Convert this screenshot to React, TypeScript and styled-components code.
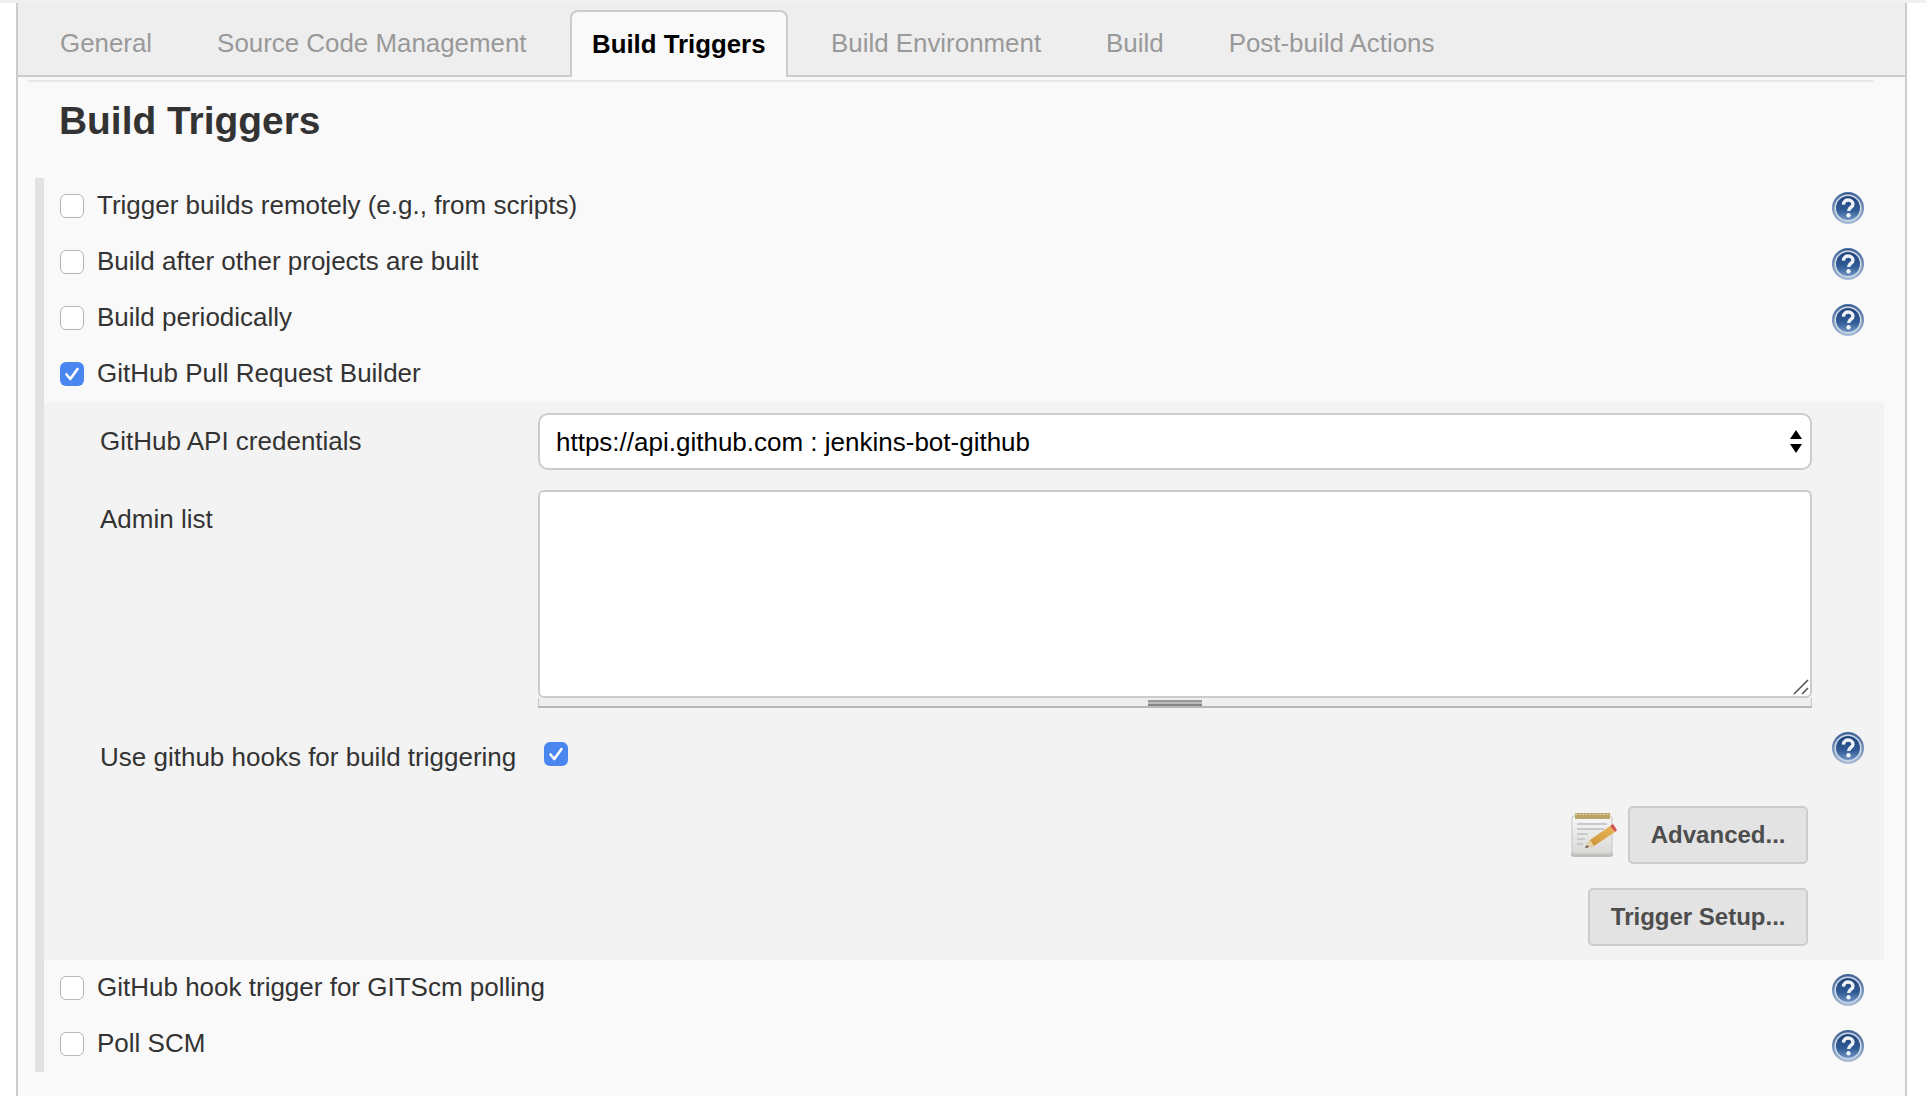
import * as React from 'react';
import styled, { createGlobalStyle } from 'styled-components';

const GlobalStyle = createGlobalStyle`
  html, body {
    margin: 0;
    padding: 0;
    background: #fff;
    overflow: hidden;
  }
  body {
    font-family: "Liberation Sans", Arial, sans-serif;
    color: #333;
  }
`

const Page = styled.div`
  width: 1926px;
  height: 1096px;
  box-sizing: border-box;
  border-top: 3px solid #eef0f2;
  padding-left: 16px;
  overflow: hidden;
`

const Panel = styled.div`
  width: 1891px;
  height: 1093px;
  box-sizing: border-box;
  background: #f9f9f9;
  border-left: 2px solid #ccc;
  border-right: 2px solid #ccc;
`

const TabBar = styled.div`
  display: flex;
  align-items: flex-end;
  gap: 21px;
  height: 74px;
  box-sizing: border-box;
  padding-left: 20px;
  background: #eee;
  border-bottom: 2px solid #ccc;
`

declare type TabPropsType = {
  $active?: boolean
}

const Tab = styled.div<TabPropsType>`
  display: flex;
  align-items: center;
  box-sizing: border-box;
  height: ${(props) => (props.$active) ? "67px" : "63px"};
  margin-bottom: ${(props) => (props.$active) ? "-2px" : "0"};
  padding: 0 ${(props) => (props.$active) ? "20.5px" : "22px"};
  font-size: ${(props) => (props.$active) ? "25.8px" : "25.9px"};
  white-space: nowrap;
  color: ${(props) => (props.$active) ? "#000" : "#999"};
  font-weight: ${(props) => (props.$active) ? "bold" : "normal"};
  background: ${(props) => (props.$active) ? "#f9f9f9" : "transparent"};
  border: ${(props) => (props.$active) ? "2px solid #ccc" : "none"};
  border-bottom: none;
  border-radius: ${(props) => (props.$active) ? "8px 8px 0 0" : "0"};
`

const SectionRule = styled.div`
  height: 2px;
  margin: 3px 32px 0 10px;
  background: #e6e6e6;
`

const SectionTitle = styled.h2`
  margin: 0;
  height: 96px;
  padding: 16px 0 0 41px;
  box-sizing: border-box;
  font-size: 38.9px;
  line-height: 46px;
  font-weight: bold;
  color: #333;
`

const Form = styled.div`
  margin-left: 17px;
  width: 1849px;
  box-sizing: border-box;
  border-left: 9px solid #e2e2e2;
`

const OptionRow = styled.div`
  display: flex;
  align-items: center;
  height: 56px;
  padding: 0 20px 0 16px;
`

const OptionLabel = styled.label`
  flex: 1;
  margin: -2px 0 0 13px;
  font-size: 26px;
  line-height: 30px;
  color: #333;
`

const CheckBox = styled.div<{ $checked?: boolean }>`
  flex: none;
  display: flex;
  align-items: center;
  justify-content: center;
  width: 24px;
  height: 24px;
  box-sizing: border-box;
  border-radius: 6px;
  background: ${(props) => (props.$checked) ? "#4a86f0" : "#fff"};
  border: ${(props) => (props.$checked) ? "none" : "1.5px solid #b4b4b4"};
`

const HelpLink = styled.a`
  flex: none;
  display: block;
  width: 32px;
  height: 32px;
  margin-top: 4px;
`

const SubSection = styled.div`
  background: #f3f3f3;
  height: 558px;
  padding: 11px 76px 0 56px;
  box-sizing: border-box;
`

const FieldRow = styled.div<{ $gap?: number }>`
  display: grid;
  grid-template-columns: 438px 1274px;
  margin-bottom: ${(props) => (props.$gap || 0)}px;
`

const FieldLabel = styled.div<{ $top?: number }>`
  align-self: ${(props) => (props.$top) ? "start" : "center"};
  margin-top: ${(props) => (props.$top || -1)}px;
  font-size: 26px;
  line-height: 30px;
  color: #333;
`

const SelectBox = styled.div`
  position: relative;
`

const Select = styled.select`
  display: block;
  width: 100%;
  height: 57px;
  box-sizing: border-box;
  appearance: none;
  padding: 0 40px 0 16px;
  border: 2px solid #ccc;
  border-radius: 10px;
  background: #fff;
  color: #000;
  font-family: "Liberation Sans", Arial, sans-serif;
  font-size: 26px;
`

const SelectArrows = styled.svg`
  position: absolute;
  top: 17px;
  right: 9px;
  width: 14px;
  height: 24px;
  pointer-events: none;
`

const AreaBox = styled.div`
  display: flex;
  flex-direction: column;
`

const AreaFrame = styled.div`
  position: relative;
`

const TextArea = styled.textarea`
  display: block;
  width: 100%;
  height: 208px;
  box-sizing: border-box;
  border: 2px solid #ccc;
  border-radius: 6px;
  background: #fff;
  resize: none;
  outline: none;
`

const AreaCorner = styled.svg`
  position: absolute;
  right: 3px;
  bottom: 3px;
  width: 16px;
  height: 16px;
`

const Grippie = styled.div`
  display: flex;
  justify-content: center;
  height: 10px;
  box-sizing: border-box;
  background: #eee;
  border: 1px solid #c4c4c4;
  border-top: none;
  border-bottom: 2px solid #b8b8b8;
`

const GrippieHandle = styled.div`
  width: 54px;
  height: 6px;
  margin-top: 2px;
  border-top: 2px solid #999;
  border-bottom: 2px solid #888;
  box-sizing: border-box;
  background: #bbb;
`

const HookRow = styled.div`
  display: flex;
  align-items: flex-start;
  margin-top: 24px;
  height: 40px;
  width: 1764px;
`

const HookLabel = styled.label`
  width: 444px;
  flex: none;
  margin-top: 10px;
  font-size: 26px;
  line-height: 30px;
  color: #333;
`

const HookCheck = styled.div`
  flex: 1;
  margin-top: 10px;
`

const HookHelp = styled(HelpLink)`
  margin-top: 0;
`

const ButtonRow = styled.div`
  display: flex;
  justify-content: flex-end;
  align-items: center;
  gap: 11px;
  margin-top: 24px;
  width: 1708px;
`

const AdvancedRow = styled(ButtonRow)`
  margin-top: 34px;
`

const Button = styled.button`
  box-sizing: border-box;
  height: 58px;
  padding: 0 20.5px;
  border: 2px solid #ccc;
  border-radius: 5px;
  background: #e3e3e3;
  color: #4d4d4d;
  font-family: "Liberation Sans", Arial, sans-serif;
  font-size: 24px;
  font-weight: bold;
`

const NoteSvg = styled.svg`
  width: 46px;
  height: 46px;
  flex: none;
`

const CheckMark: React.FunctionComponent = () => (
  <svg width="16" height="16" viewBox="0 0 16 16">
    <path d="M2.5 8.5 L6.3 13 L13.5 3" fill="none" stroke="#fff" strokeWidth="2.6" strokeLinecap="round" strokeLinejoin="round" />
  </svg>
)

const HelpIcon: React.FunctionComponent = () => (
  <svg width="32" height="32" viewBox="0 0 32 32">
    <defs>
      <linearGradient id="helpRing" x1="0" y1="0" x2="0" y2="1">
        <stop offset="0" stopColor="#3f6194" />
        <stop offset="1" stopColor="#a9bdd8" />
      </linearGradient>
      <linearGradient id="helpFill" x1="0" y1="0" x2="0" y2="1">
        <stop offset="0" stopColor="#1f4379" />
        <stop offset="0.6" stopColor="#315c96" />
        <stop offset="1" stopColor="#6f94c2" />
      </linearGradient>
    </defs>
    <circle cx="16" cy="16" r="16" fill="url(#helpRing)" />
    <circle cx="16" cy="16" r="13.6" fill="#cfdbea" />
    <circle cx="16" cy="16" r="12" fill="url(#helpFill)" />
    <path d="M11.4 12.6 C11.6 9.4 14 8 16.2 8 C19 8 21 9.8 21 12.2 C21 15.4 16.6 15.4 16.6 19" fill="none" stroke="#eef2f7" strokeWidth="3.4" />
    <circle cx="16.5" cy="23.2" r="2.2" fill="#eef2f7" />
  </svg>
)

const NoteIcon: React.FunctionComponent = () => (
  <NoteSvg viewBox="0 0 46 46">
    <defs>
      <linearGradient id="notePage" x1="0" y1="0" x2="0" y2="1">
        <stop offset="0" stopColor="#f8f8f6" />
        <stop offset="1" stopColor="#d8d8d6" />
      </linearGradient>
      <linearGradient id="notePencil" x1="0" y1="1" x2="1" y2="0">
        <stop offset="0" stopColor="#c98f35" />
        <stop offset="1" stopColor="#eab65a" />
      </linearGradient>
    </defs>
    <rect x="0" y="39" width="42" height="6" rx="3" fill="#bdbdbb" />
    <rect x="1" y="4" width="40" height="38" rx="2" fill="url(#notePage)" stroke="#c4c4c2" />
    <rect x="4" y="1" width="35" height="6" fill="#b9a469" />
    <path d="M4 2.5 H39" stroke="#e0d5ae" strokeWidth="1" strokeDasharray="2 1.5" />
    <path d="M6 12 H36 M6 17 H33 M6 22 H17 M6 27 H14 M6 32 H12" stroke="#c6cace" strokeWidth="2" />
    <path d="M14 36 L19 28 L39 14 L44 20 L23 34 Z" fill="url(#notePencil)" />
    <path d="M14 36 L19 28 L23 34 Z" fill="#e8d3a8" />
    <path d="M14 36 L16 33 L18 35 Z" fill="#555" />
    <path d="M39 14 L44 20 L46 18 L42 12 Z" fill="#d2554f" />
  </NoteSvg>
)

const Option: React.FunctionComponent<{ label: string, checked?: boolean, help?: boolean }> = ({
  label,
  checked,
  help = true,
}) => (
  <OptionRow>
    <CheckBox $checked={checked}>{checked && <CheckMark />}</CheckBox>
    <OptionLabel>{label}</OptionLabel>
    {help && <HelpLink><HelpIcon /></HelpLink>}
  </OptionRow>
)

const App: React.FunctionComponent = () => {
  const tabs = ["General", "Source Code Management", "Build Triggers", "Build Environment", "Build", "Post-build Actions"]

  return (
    <Page>
      <GlobalStyle />
      <Panel>
        <TabBar>
          {tabs.map((tab) => <Tab key={tab} $active={tab === "Build Triggers"}>{tab}</Tab>)}
        </TabBar>
        <SectionRule />
        <SectionTitle>Build Triggers</SectionTitle>
        <Form>
          <Option label="Trigger builds remotely (e.g., from scripts)" />
          <Option label="Build after other projects are built" />
          <Option label="Build periodically" />
          <Option label="GitHub Pull Request Builder" checked help={false} />
          <SubSection>
            <FieldRow $gap={20}>
              <FieldLabel>GitHub API credentials</FieldLabel>
              <SelectBox>
                <Select defaultValue="bot">
                  <option value="bot">https://api.github.com : jenkins-bot-github</option>
                </Select>
                <SelectArrows viewBox="0 0 14 24">
                  <path d="M7 0 L13 9 H1 Z M1 14 H13 L7 23 Z" fill="#000" />
                </SelectArrows>
              </SelectBox>
            </FieldRow>
            <FieldRow>
              <FieldLabel $top={14}>Admin list</FieldLabel>
              <AreaBox>
                <AreaFrame>
                  <TextArea />
                  <AreaCorner viewBox="0 0 16 16">
                    <path d="M1 15 L15 1 M9 15 L15 9" stroke="#555" strokeWidth="1.6" />
                  </AreaCorner>
                </AreaFrame>
                <Grippie><GrippieHandle /></Grippie>
              </AreaBox>
            </FieldRow>
            <HookRow>
              <HookLabel>Use github hooks for build triggering</HookLabel>
              <HookCheck><CheckBox $checked><CheckMark /></CheckBox></HookCheck>
              <HookHelp><HelpIcon /></HookHelp>
            </HookRow>
            <AdvancedRow>
              <NoteIcon />
              <Button>Advanced...</Button>
            </AdvancedRow>
            <ButtonRow>
              <Button>Trigger Setup...</Button>
            </ButtonRow>
          </SubSection>
          <Option label="GitHub hook trigger for GITScm polling" />
          <Option label="Poll SCM" />
        </Form>
      </Panel>
    </Page>
  )
}

export default App
